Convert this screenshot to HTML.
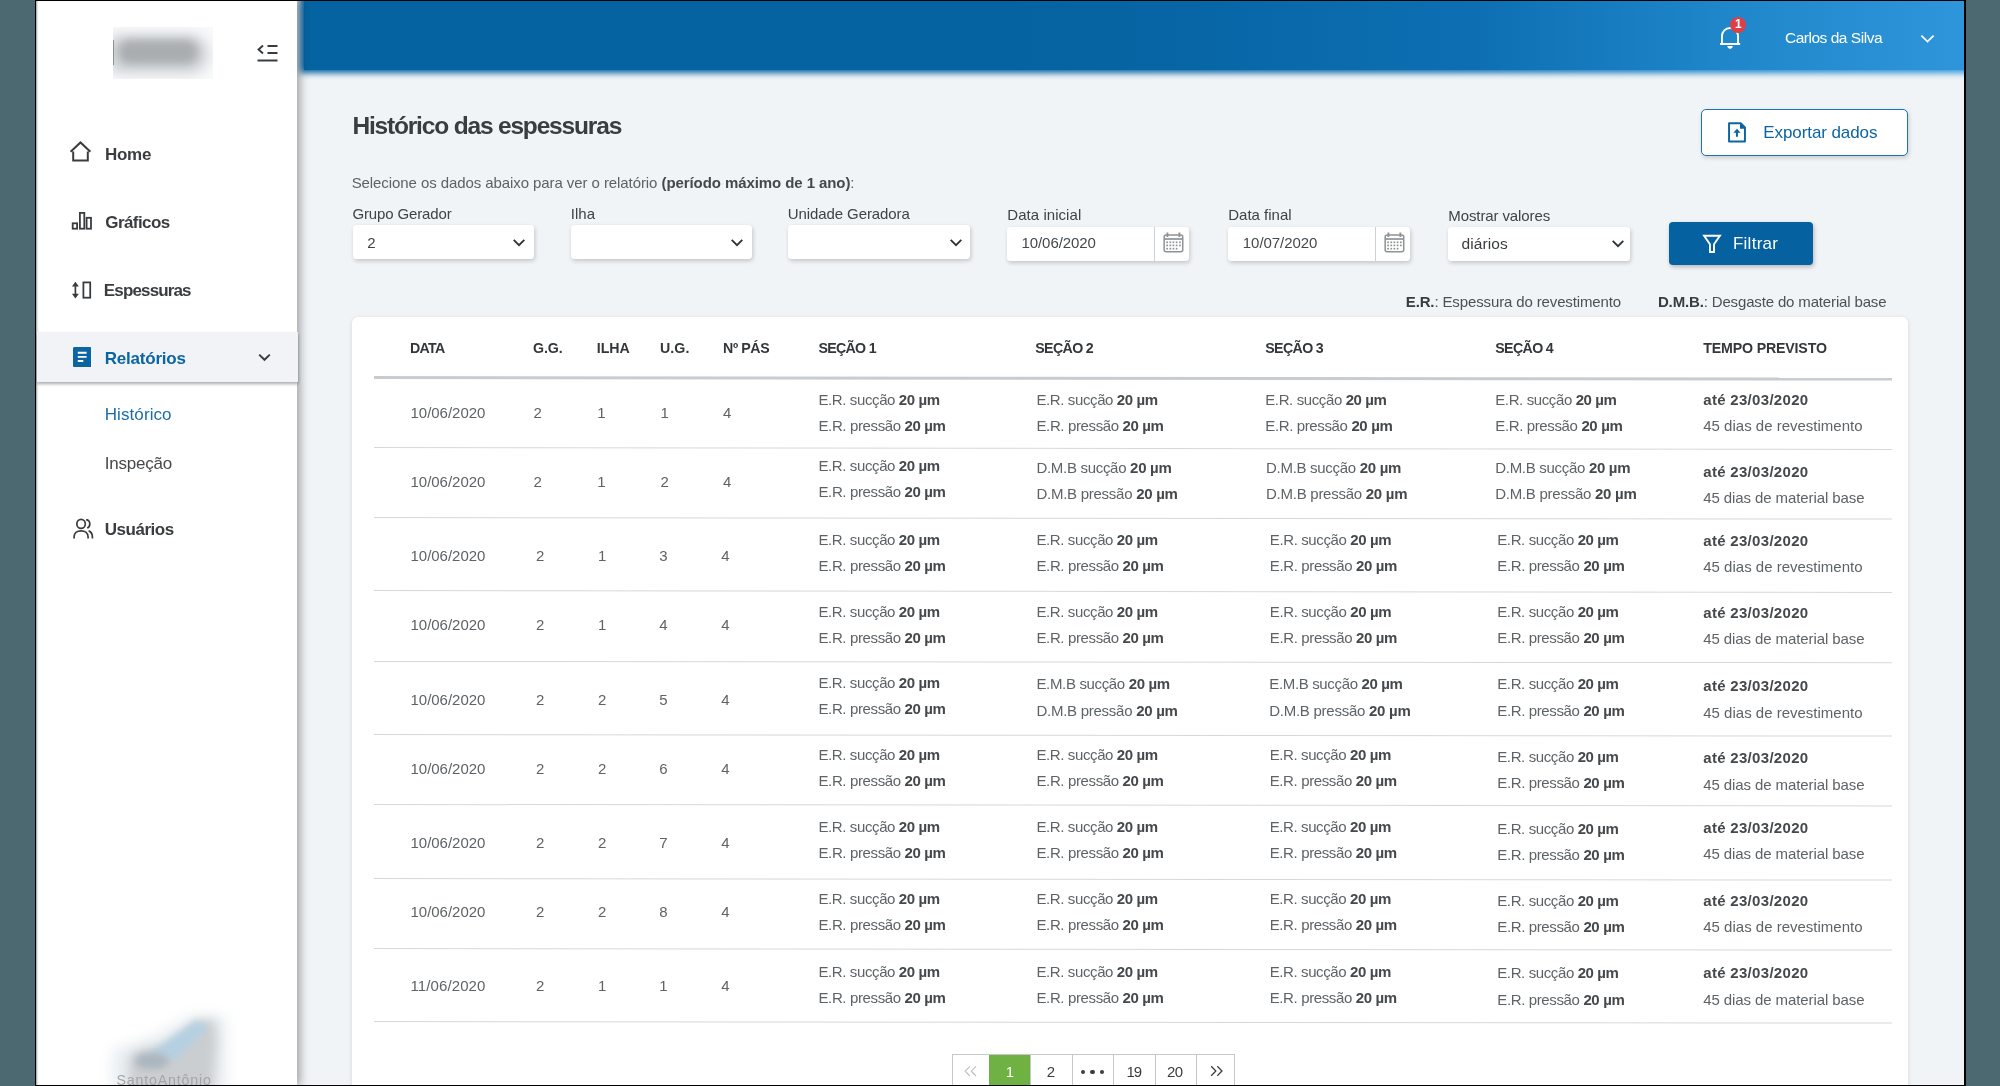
<!DOCTYPE html>
<html lang="pt-BR"><head><meta charset="utf-8"><title>Histórico das espessuras</title>
<style>
html,body{margin:0;padding:0}
body{width:2000px;height:1086px;overflow:hidden;background:#4c6870;position:relative;font-family:"Liberation Sans", sans-serif;}
.t{position:absolute;white-space:nowrap;line-height:1;margin:0;padding:0}
.a{position:absolute}
b{font-weight:700}

#frame{position:absolute;left:35px;top:0;width:1931px;height:1086px;background:#000;}
#page{z-index:0;position:absolute;left:36px;top:1px;width:1928px;height:1084px;background:#f0f4f7;overflow:hidden}
#side{position:absolute;left:0;top:0;width:261px;height:1084px;background:#fff;box-shadow:2px 0 9px 1px rgba(0,0,0,.34),inset 2px 0 2px -1px rgba(0,0,0,.4);z-index:3}
#hdr{position:absolute;left:267.5px;top:-6px;right:-8px;height:75px;background:linear-gradient(90deg,#0563a1 0%,#0563a1 42%,#0765a5 52%,#0d6fb2 70%,#1f86ca 85%,#2e95da 99%);z-index:2}
#hglow{position:absolute;left:264px;top:-10px;right:-12px;height:81.7px;background:linear-gradient(90deg,#0563a1 0%,#0563a1 42%,#0765a5 52%,#0d6fb2 70%,#1f86ca 85%,#2e95da 99%);filter:blur(3.2px);z-index:1}
#card{position:absolute;left:316px;top:315.8px;width:1555.7px;height:800px;background:#fff;border-radius:6px;box-shadow:0 1px 4px rgba(0,0,0,.12)}
.sel{position:absolute;background:#fff;border-radius:3.5px;box-shadow:1px 2px 4px rgba(0,0,0,.19)}
.hl{position:absolute;height:1px;background:#d3d9dc;left:374.3px;width:1517.7px}
#w{position:absolute;left:0;top:0;width:2000px;height:1086px;will-change:transform}
</style></head><body><div id="w">
<div id="frame"></div>
<div id="page"><div id="side"></div><div id="hglow"></div><div id="hdr"></div><div id="card"></div></div>
<div class="a" style="left:113px;top:26.7px;width:100.3px;height:52.5px;overflow:hidden;background:#f8f9fb"><div class="a" style="left:-10px;top:7px;width:106px;height:40px;border-radius:20px;background:#d2d5d8;filter:blur(6px)"></div><div class="a" style="left:5px;top:13.5px;width:80px;height:24px;border-radius:12px;background:#a9adb0;filter:blur(4.5px)"></div><div class="a" style="left:0;top:13.5px;width:1.2px;height:24.5px;background:#6f7376;opacity:.7"></div></div>
<svg class="a" style="left:256px;top:43px;" width="23" height="20" viewBox="0 0 23 20"><g fill="none" stroke="#3a3d40" stroke-width="2"><path d="M11.5 3H21.5M11.5 10H21.5M1.5 17.5H21.5"/><path d="M7 2.6L2.6 6.5L7 10.4" stroke-linejoin="miter"/></g></svg>
<svg class="a" style="left:69px;top:140px;" width="24" height="23" viewBox="0 0 24 23"><path d="M4.2 11.5V20.5H18.8V11.5M1.6 11.8L11.5 2.4L21.4 11.8" fill="none" stroke="#3a3d40" stroke-width="2" stroke-linejoin="miter"/></svg>
<div class="t" style="left:104.95px;top:145.81px;font-size:17px;color:#3a3d40;font-weight:700;letter-spacing:-0.238px;">Home</div>
<svg class="a" style="left:71px;top:211px;" width="22" height="20" viewBox="0 0 22 20"><g fill="none" stroke="#3a3d40" stroke-width="1.8"><rect x="1.7" y="12.3" width="4.4" height="5.4"/><rect x="8.9" y="1.9" width="4.4" height="15.8"/><rect x="15.6" y="6.8" width="4.4" height="10.9"/></g></svg>
<div class="t" style="left:105.25px;top:213.91px;font-size:17px;color:#3a3d40;font-weight:700;letter-spacing:-0.581px;">Gráficos</div>
<svg class="a" style="left:71px;top:280px;" width="22" height="20" viewBox="0 0 22 20"><g fill="none" stroke="#3a3d40" stroke-width="1.8"><rect x="12.4" y="2.4" width="6.8" height="15.3"/><path d="M4.4 4.5V15.5" stroke-width="1.7"/></g><path d="M4.4 1.7L7.9 6.4H0.9ZM4.4 18.4L7.9 13.7H0.9Z" fill="#3a3d40"/></svg>
<div class="t" style="left:103.85px;top:282.01px;font-size:17px;color:#3a3d40;font-weight:700;letter-spacing:-0.859px;">Espessuras</div>
<div class="a" style="left:36.5px;top:332px;width:261px;height:50px;background:#f1f3f7;box-shadow:0 2px 3px rgba(0,0,0,.33);z-index:4"></div>
<svg class="a" style="left:72.5px;top:347px;z-index:5;" width="18.5" height="20.2" viewBox="0 0 18.5 20.2"><rect x="0" y="0" width="18.5" height="20.2" rx="1.5" fill="#0c65a3"/><path d="M4.8 5.8H13.6M4.8 9.9H13.6M4.8 14H10.3" stroke="#fff" stroke-width="1.9" fill="none"/></svg>
<div class="t" style="left:104.75px;top:349.51px;font-size:17px;color:#0c65a3;font-weight:700;letter-spacing:-0.213px;z-index:5;">Relatórios</div>
<svg class="a" style="left:257px;top:352px;z-index:5;" width="15" height="11" viewBox="0 0 15 11"><path d="M2.2 2.6L7.5 7.8L12.8 2.6" fill="none" stroke="#3a3d40" stroke-width="1.9"/></svg>
<div class="t" style="left:104.75px;top:405.81px;font-size:17px;color:#1b6dab;letter-spacing:0.087px;">Histórico</div>
<div class="t" style="left:104.75px;top:454.51px;font-size:17px;color:#45494c;letter-spacing:-0.211px;">Inspeção</div>
<svg class="a" style="left:70px;top:516px;" width="25" height="25" viewBox="0 0 25 25"><g fill="none" stroke="#3a3d40" stroke-width="1.9" transform="translate(1.9 0.6) scale(0.9 0.96)"><circle cx="10.2" cy="7.6" r="4.7"/><path d="M2.4 22.8V21.2C2.4 17.2 5.6 14.8 10.2 14.8C14.8 14.8 18 17.2 18 21.2V22.8"/><path d="M15.8 3.2C18.4 3.6 19.9 5.4 19.9 7.6C19.9 9.6 18.7 11.2 17 11.9M18.6 14.9C21.2 15.9 22.8 18 22.8 21.2V22.8"/></g></svg>
<div class="t" style="left:104.75px;top:520.81px;font-size:17px;color:#3a3d40;font-weight:700;letter-spacing:-0.476px;">Usuários</div>
<svg class="a" style="left:95px;top:1000px" width="150" height="86" viewBox="95 1000 150 86"><defs><filter id="bl1" x="-30%" y="-30%" width="160%" height="160%"><feGaussianBlur stdDeviation="5.5"/></filter><filter id="bl2" x="-30%" y="-30%" width="160%" height="160%"><feGaussianBlur stdDeviation="3.5"/></filter><filter id="bl3" x="-30%" y="-30%" width="160%" height="160%"><feGaussianBlur stdDeviation="7"/></filter></defs><path d="M112 1092V1050L150 1038L190 1016L226 1016V1092Z" fill="#e9eef2" filter="url(#bl3)"/><path d="M129 1096V1056L142 1049L166 1046L186 1030L199 1020L215 1020L217 1042L213 1096Z" fill="#cbced0" filter="url(#bl1)"/><path d="M148 1054L196 1021L209 1027L176 1060Z" fill="#b5d0e2" filter="url(#bl2)"/><ellipse cx="152" cy="1061" rx="17" ry="8" fill="#aab6bf" filter="url(#bl2)"/></svg>
<div class="t" style="left:116.59px;top:1073.18px;font-size:14.2px;color:#a3a6a8;letter-spacing:0.832px;">SantoAntônio</div>
<svg class="a" style="left:1717px;top:24px;" width="27" height="28" viewBox="0 0 27 28"><g fill="none" stroke="#fff" stroke-width="1.9"><path d="M4.95 19.4V12A8.05 8.05 0 0 1 21.05 12V19.4"/><path d="M3 20H23.2" stroke-width="2"/></g><path d="M10.3 22.1H15.8C15.6 23.9 14.4 24.9 13.05 24.9C11.7 24.9 10.5 23.9 10.3 22.1Z" fill="#fff"/></svg>
<div class="a" style="left:1730.2px;top:17.1px;width:15.8px;height:15.8px;border-radius:50%;background:#dc4046"></div>
<div class="t" style="left:1735.00px;top:18.44px;font-size:12px;color:#fff;font-weight:700;">1</div>
<div class="t" style="left:1784.92px;top:30.28px;font-size:15.5px;color:#fff;letter-spacing:-0.473px;">Carlos da Silva</div>
<svg class="a" style="left:1919px;top:33px;" width="17" height="12" viewBox="0 0 17 12"><path d="M2.4 2.6L8.5 8.6L14.6 2.6" fill="none" stroke="#fff" stroke-width="1.7"/></svg>
<div class="t" style="left:352.38px;top:114.46px;font-size:24.5px;color:#3a3d40;font-weight:700;letter-spacing:-1.173px;">Histórico das espessuras</div>
<div class="a" style="left:1700.8px;top:109px;width:205px;height:44.6px;border:1px solid #1f72ad;border-radius:5px;background:#fff;box-shadow:1px 2px 4px rgba(0,0,0,.16)"></div>
<svg class="a" style="left:1727px;top:121px;" width="21" height="23" viewBox="0 0 21 23"><path d="M2.05 2.15H13.7L17.95 6.5V20.45H2.05Z" fill="none" stroke="#0c65a3" stroke-width="1.95" stroke-linejoin="round"/><path d="M13 2.1V7.7H17.95V6.5L13.7 2.1Z" fill="#0c65a3"/><path d="M9.95 7.7L13.6 11.7H6.3Z" fill="#0c65a3"/><path d="M9.95 10.5V14.9" stroke="#0c65a3" stroke-width="2" stroke-linecap="round" fill="none"/></svg>
<div class="t" style="left:1763.35px;top:123.51px;font-size:17px;color:#0c65a3;letter-spacing:-0.091px;">Exportar dados</div>
<div class="t" style="left:351.65px;top:174.60px;font-size:15px;color:#5d6266;letter-spacing:-0.079px;">Selecione os dados abaixo para ver o relatório <b style="color:#45494c">(período máximo de 1 ano)</b>:</div>
<div class="t" style="left:352.45px;top:206.00px;font-size:15px;color:#3f4346;letter-spacing:-0.133px;">Grupo Gerador</div>
<div class="t" style="left:570.65px;top:206.00px;font-size:15px;color:#3f4346;letter-spacing:0.104px;">Ilha</div>
<div class="t" style="left:787.85px;top:206.00px;font-size:15px;color:#3f4346;letter-spacing:-0.101px;">Unidade Geradora</div>
<div class="t" style="left:1007.25px;top:207.40px;font-size:15px;color:#3f4346;letter-spacing:0.057px;">Data inicial</div>
<div class="t" style="left:1228.25px;top:207.40px;font-size:15px;color:#3f4346;letter-spacing:0.003px;">Data final</div>
<div class="t" style="left:1448.35px;top:208.10px;font-size:15px;color:#3f4346;letter-spacing:-0.111px;">Mostrar valores</div>
<div class="sel" style="left:353px;top:225px;width:181px;height:33.6px"></div>
<svg class="a" style="left:511.5px;top:238px;" width="14" height="10" viewBox="0 0 14 10"><path d="M1.7 1.9L7 7.2L12.3 1.9" fill="none" stroke="#303336" stroke-width="1.85"/></svg>
<div class="sel" style="left:570.6px;top:225px;width:181.4px;height:33.6px"></div>
<svg class="a" style="left:729.5px;top:238px;" width="14" height="10" viewBox="0 0 14 10"><path d="M1.7 1.9L7 7.2L12.3 1.9" fill="none" stroke="#303336" stroke-width="1.85"/></svg>
<div class="sel" style="left:787.8px;top:225px;width:182px;height:33.6px"></div>
<svg class="a" style="left:949px;top:237.5px;" width="14" height="10" viewBox="0 0 14 10"><path d="M1.7 1.9L7 7.2L12.3 1.9" fill="none" stroke="#303336" stroke-width="1.85"/></svg>
<div class="t" style="left:367.25px;top:235.00px;font-size:15px;color:#3f4346;">2</div>
<div class="sel" style="left:1006.9px;top:226.5px;width:182.2px;height:34.2px"></div>
<div class="a" style="left:1154px;top:226.5px;width:1px;height:34.2px;background:#cfd2d4"></div>
<div class="t" style="left:1021.45px;top:235.30px;font-size:15px;color:#45494c;letter-spacing:-0.064px;">10/06/2020</div>
<svg class="a" style="left:1162.6px;top:231.6px;" width="21" height="21" viewBox="0 0 21 21"><g fill="none" stroke="#8f9396" stroke-width="1.5"><rect x="1.15" y="3.05" width="18.6" height="16.6" rx="2"/><path d="M1.2 7H19.7" stroke-width="1.7"/><path d="M4.4 0.4V5M16.4 0.4V5" stroke-width="1.9"/></g><g fill="#8f9396"><rect x="3.25" y="9.45" width="1.7" height="1.7"/><rect x="6.45" y="9.45" width="1.7" height="1.7"/><rect x="9.55" y="9.45" width="1.7" height="1.7"/><rect x="12.75" y="9.45" width="1.7" height="1.7"/><rect x="16.05" y="9.45" width="1.7" height="1.7"/><rect x="3.25" y="12.55" width="1.7" height="1.7"/><rect x="6.45" y="12.55" width="1.7" height="1.7"/><rect x="9.55" y="12.55" width="1.7" height="1.7"/><rect x="12.75" y="12.55" width="1.7" height="1.7"/><rect x="16.05" y="12.55" width="1.7" height="1.7"/><rect x="3.25" y="15.85" width="1.7" height="1.7"/><rect x="6.45" y="15.85" width="1.7" height="1.7"/><rect x="9.55" y="15.85" width="1.7" height="1.7"/><rect x="12.75" y="15.85" width="1.7" height="1.7"/></g></svg>
<div class="sel" style="left:1227.8px;top:226.5px;width:182.1px;height:34.2px"></div>
<div class="a" style="left:1375px;top:226.5px;width:1px;height:34.2px;background:#cfd2d4"></div>
<div class="t" style="left:1242.85px;top:235.30px;font-size:15px;color:#45494c;letter-spacing:-0.064px;">10/07/2020</div>
<svg class="a" style="left:1383.6px;top:231.6px;" width="21" height="21" viewBox="0 0 21 21"><g fill="none" stroke="#8f9396" stroke-width="1.5"><rect x="1.15" y="3.05" width="18.6" height="16.6" rx="2"/><path d="M1.2 7H19.7" stroke-width="1.7"/><path d="M4.4 0.4V5M16.4 0.4V5" stroke-width="1.9"/></g><g fill="#8f9396"><rect x="3.25" y="9.45" width="1.7" height="1.7"/><rect x="6.45" y="9.45" width="1.7" height="1.7"/><rect x="9.55" y="9.45" width="1.7" height="1.7"/><rect x="12.75" y="9.45" width="1.7" height="1.7"/><rect x="16.05" y="9.45" width="1.7" height="1.7"/><rect x="3.25" y="12.55" width="1.7" height="1.7"/><rect x="6.45" y="12.55" width="1.7" height="1.7"/><rect x="9.55" y="12.55" width="1.7" height="1.7"/><rect x="12.75" y="12.55" width="1.7" height="1.7"/><rect x="16.05" y="12.55" width="1.7" height="1.7"/><rect x="3.25" y="15.85" width="1.7" height="1.7"/><rect x="6.45" y="15.85" width="1.7" height="1.7"/><rect x="9.55" y="15.85" width="1.7" height="1.7"/><rect x="12.75" y="15.85" width="1.7" height="1.7"/></g></svg>
<div class="sel" style="left:1447.8px;top:226.6px;width:182px;height:34.4px"></div>
<svg class="a" style="left:1610.7px;top:239px;" width="14" height="10" viewBox="0 0 14 10"><path d="M1.7 1.9L7 7.2L12.3 1.9" fill="none" stroke="#303336" stroke-width="1.85"/></svg>
<div class="t" style="left:1461.52px;top:235.78px;font-size:15.5px;color:#3a3d40;letter-spacing:0.110px;">diários</div>
<div class="a" style="left:1668.6px;top:221.7px;width:144.9px;height:42.9px;border-radius:4px;background:#0561a0;box-shadow:1px 2px 4px rgba(0,0,0,.25)"></div>
<svg class="a" style="left:1702px;top:234px;" width="20" height="20" viewBox="0 0 20 20"><path d="M2.1 1.75H17.9L12 10.3V18H7.95V10.3Z" fill="none" stroke="#fff" stroke-width="1.9" stroke-linejoin="miter"/></svg>
<div class="t" style="left:1732.95px;top:235.31px;font-size:17px;color:#fff;letter-spacing:0.261px;">Filtrar</div>
<div class="t" style="left:1405.75px;top:294.20px;font-size:15px;color:#4d5155;letter-spacing:-0.129px;"><b style="color:#3a3d40">E.R.</b>: Espessura do revestimento</div>
<div class="t" style="left:1657.95px;top:294.20px;font-size:15px;color:#4d5155;letter-spacing:-0.152px;"><b style="color:#3a3d40">D.M.B.</b>: Desgaste do material base</div>
<div class="t" style="left:410.04px;top:340.93px;font-size:14.2px;color:#34373a;font-weight:700;letter-spacing:-0.732px;">DATA</div>
<div class="t" style="left:533.04px;top:340.93px;font-size:14.2px;color:#34373a;font-weight:700;letter-spacing:-0.122px;">G.G.</div>
<div class="t" style="left:596.79px;top:340.93px;font-size:14.2px;color:#34373a;font-weight:700;letter-spacing:-0.086px;">ILHA</div>
<div class="t" style="left:660.04px;top:340.93px;font-size:14.2px;color:#34373a;font-weight:700;letter-spacing:0.060px;">U.G.</div>
<div class="t" style="left:723.04px;top:340.93px;font-size:14.2px;color:#34373a;font-weight:700;letter-spacing:-0.389px;">Nº PÁS</div>
<div class="t" style="left:818.49px;top:340.93px;font-size:14.2px;color:#34373a;font-weight:700;letter-spacing:-0.707px;">SEÇÃO 1</div>
<div class="t" style="left:1035.29px;top:340.93px;font-size:14.2px;color:#34373a;font-weight:700;letter-spacing:-0.641px;">SEÇÃO 2</div>
<div class="t" style="left:1265.29px;top:340.93px;font-size:14.2px;color:#34373a;font-weight:700;letter-spacing:-0.641px;">SEÇÃO 3</div>
<div class="t" style="left:1495.29px;top:340.93px;font-size:14.2px;color:#34373a;font-weight:700;letter-spacing:-0.641px;">SEÇÃO 4</div>
<div class="t" style="left:1703.29px;top:340.93px;font-size:14.2px;color:#34373a;font-weight:700;letter-spacing:-0.171px;">TEMPO PREVISTO</div>
<div class="hl" style="top:376.1px;height:3px;background:#c6ccd0;transform-origin:0 50%;transform:skewY(0.0604deg)"></div>
<div class="t" style="left:410.50px;top:405.00px;font-size:15px;color:#5e6367;letter-spacing:-0.020px;">10/06/2020</div>
<div class="t" style="left:533.50px;top:405.00px;font-size:15px;color:#5e6367;">2</div>
<div class="t" style="left:597.25px;top:405.00px;font-size:15px;color:#5e6367;">1</div>
<div class="t" style="left:660.50px;top:405.00px;font-size:15px;color:#5e6367;">1</div>
<div class="t" style="left:723.00px;top:405.00px;font-size:15px;color:#5e6367;">4</div>
<div class="t" style="left:818.45px;top:391.80px;font-size:15px;color:#5e6367;letter-spacing:-0.387px;">E.R. sucção <b style="color:#45494c">20 µm</b></div>
<div class="t" style="left:818.45px;top:417.80px;font-size:15px;color:#5e6367;letter-spacing:-0.366px;">E.R. pressão <b style="color:#45494c">20 µm</b></div>
<div class="t" style="left:1036.45px;top:391.80px;font-size:15px;color:#5e6367;letter-spacing:-0.387px;">E.R. sucção <b style="color:#45494c">20 µm</b></div>
<div class="t" style="left:1036.45px;top:417.80px;font-size:15px;color:#5e6367;letter-spacing:-0.366px;">E.R. pressão <b style="color:#45494c">20 µm</b></div>
<div class="t" style="left:1265.25px;top:391.80px;font-size:15px;color:#5e6367;letter-spacing:-0.387px;">E.R. sucção <b style="color:#45494c">20 µm</b></div>
<div class="t" style="left:1265.25px;top:417.80px;font-size:15px;color:#5e6367;letter-spacing:-0.366px;">E.R. pressão <b style="color:#45494c">20 µm</b></div>
<div class="t" style="left:1495.25px;top:391.80px;font-size:15px;color:#5e6367;letter-spacing:-0.387px;">E.R. sucção <b style="color:#45494c">20 µm</b></div>
<div class="t" style="left:1495.25px;top:417.80px;font-size:15px;color:#5e6367;letter-spacing:-0.366px;">E.R. pressão <b style="color:#45494c">20 µm</b></div>
<div class="t" style="left:1703.25px;top:391.80px;font-size:15px;color:#45494c;font-weight:700;letter-spacing:0.306px;">até 23/03/2020</div>
<div class="t" style="left:1703.25px;top:417.80px;font-size:15px;color:#5e6367;letter-spacing:0.002px;">45 dias de revestimento</div>
<div class="hl" style="top:446.7px;height:1px;background:#d3d9dc;transform-origin:0 50%;transform:skewY(0.0755deg)"></div>
<div class="t" style="left:410.50px;top:474.20px;font-size:15px;color:#5e6367;letter-spacing:-0.020px;">10/06/2020</div>
<div class="t" style="left:533.50px;top:474.20px;font-size:15px;color:#5e6367;">2</div>
<div class="t" style="left:597.25px;top:474.20px;font-size:15px;color:#5e6367;">1</div>
<div class="t" style="left:660.50px;top:474.20px;font-size:15px;color:#5e6367;">2</div>
<div class="t" style="left:723.00px;top:474.20px;font-size:15px;color:#5e6367;">4</div>
<div class="t" style="left:818.45px;top:458.20px;font-size:15px;color:#5e6367;letter-spacing:-0.387px;">E.R. sucção <b style="color:#45494c">20 µm</b></div>
<div class="t" style="left:818.45px;top:484.20px;font-size:15px;color:#5e6367;letter-spacing:-0.366px;">E.R. pressão <b style="color:#45494c">20 µm</b></div>
<div class="t" style="left:1036.45px;top:460.20px;font-size:15px;color:#5e6367;letter-spacing:-0.299px;">D.M.B sucção <b style="color:#45494c">20 µm</b></div>
<div class="t" style="left:1036.45px;top:486.20px;font-size:15px;color:#5e6367;letter-spacing:-0.262px;">D.M.B pressão <b style="color:#45494c">20 µm</b></div>
<div class="t" style="left:1266.05px;top:460.20px;font-size:15px;color:#5e6367;letter-spacing:-0.299px;">D.M.B sucção <b style="color:#45494c">20 µm</b></div>
<div class="t" style="left:1266.05px;top:486.20px;font-size:15px;color:#5e6367;letter-spacing:-0.262px;">D.M.B pressão <b style="color:#45494c">20 µm</b></div>
<div class="t" style="left:1495.25px;top:460.20px;font-size:15px;color:#5e6367;letter-spacing:-0.299px;">D.M.B sucção <b style="color:#45494c">20 µm</b></div>
<div class="t" style="left:1495.25px;top:486.20px;font-size:15px;color:#5e6367;letter-spacing:-0.262px;">D.M.B pressão <b style="color:#45494c">20 µm</b></div>
<div class="t" style="left:1703.25px;top:463.80px;font-size:15px;color:#45494c;font-weight:700;letter-spacing:0.306px;">até 23/03/2020</div>
<div class="t" style="left:1703.25px;top:489.80px;font-size:15px;color:#5e6367;letter-spacing:-0.093px;">45 dias de material base</div>
<div class="hl" style="top:516.7px;height:1px;background:#d3d9dc;transform-origin:0 50%;transform:skewY(0.0604deg)"></div>
<div class="t" style="left:410.50px;top:548.20px;font-size:15px;color:#5e6367;letter-spacing:-0.020px;">10/06/2020</div>
<div class="t" style="left:536.05px;top:548.20px;font-size:15px;color:#5e6367;">2</div>
<div class="t" style="left:598.05px;top:548.20px;font-size:15px;color:#5e6367;">1</div>
<div class="t" style="left:659.25px;top:548.20px;font-size:15px;color:#5e6367;">3</div>
<div class="t" style="left:721.25px;top:548.20px;font-size:15px;color:#5e6367;">4</div>
<div class="t" style="left:818.45px;top:532.20px;font-size:15px;color:#5e6367;letter-spacing:-0.387px;">E.R. sucção <b style="color:#45494c">20 µm</b></div>
<div class="t" style="left:818.45px;top:558.20px;font-size:15px;color:#5e6367;letter-spacing:-0.366px;">E.R. pressão <b style="color:#45494c">20 µm</b></div>
<div class="t" style="left:1036.45px;top:532.20px;font-size:15px;color:#5e6367;letter-spacing:-0.387px;">E.R. sucção <b style="color:#45494c">20 µm</b></div>
<div class="t" style="left:1036.45px;top:558.20px;font-size:15px;color:#5e6367;letter-spacing:-0.366px;">E.R. pressão <b style="color:#45494c">20 µm</b></div>
<div class="t" style="left:1269.85px;top:532.20px;font-size:15px;color:#5e6367;letter-spacing:-0.387px;">E.R. sucção <b style="color:#45494c">20 µm</b></div>
<div class="t" style="left:1269.85px;top:558.20px;font-size:15px;color:#5e6367;letter-spacing:-0.366px;">E.R. pressão <b style="color:#45494c">20 µm</b></div>
<div class="t" style="left:1497.25px;top:532.20px;font-size:15px;color:#5e6367;letter-spacing:-0.387px;">E.R. sucção <b style="color:#45494c">20 µm</b></div>
<div class="t" style="left:1497.25px;top:558.20px;font-size:15px;color:#5e6367;letter-spacing:-0.366px;">E.R. pressão <b style="color:#45494c">20 µm</b></div>
<div class="t" style="left:1703.25px;top:533.00px;font-size:15px;color:#45494c;font-weight:700;letter-spacing:0.306px;">até 23/03/2020</div>
<div class="t" style="left:1703.25px;top:559.40px;font-size:15px;color:#5e6367;letter-spacing:0.002px;">45 dias de revestimento</div>
<div class="hl" style="top:590.3px;height:1px;background:#d3d9dc;transform-origin:0 50%;transform:skewY(0.0755deg)"></div>
<div class="t" style="left:410.50px;top:617.00px;font-size:15px;color:#5e6367;letter-spacing:-0.020px;">10/06/2020</div>
<div class="t" style="left:536.05px;top:617.00px;font-size:15px;color:#5e6367;">2</div>
<div class="t" style="left:598.05px;top:617.00px;font-size:15px;color:#5e6367;">1</div>
<div class="t" style="left:659.25px;top:617.00px;font-size:15px;color:#5e6367;">4</div>
<div class="t" style="left:721.25px;top:617.00px;font-size:15px;color:#5e6367;">4</div>
<div class="t" style="left:818.45px;top:604.20px;font-size:15px;color:#5e6367;letter-spacing:-0.387px;">E.R. sucção <b style="color:#45494c">20 µm</b></div>
<div class="t" style="left:818.45px;top:630.20px;font-size:15px;color:#5e6367;letter-spacing:-0.366px;">E.R. pressão <b style="color:#45494c">20 µm</b></div>
<div class="t" style="left:1036.45px;top:604.20px;font-size:15px;color:#5e6367;letter-spacing:-0.387px;">E.R. sucção <b style="color:#45494c">20 µm</b></div>
<div class="t" style="left:1036.45px;top:630.20px;font-size:15px;color:#5e6367;letter-spacing:-0.366px;">E.R. pressão <b style="color:#45494c">20 µm</b></div>
<div class="t" style="left:1269.85px;top:604.20px;font-size:15px;color:#5e6367;letter-spacing:-0.387px;">E.R. sucção <b style="color:#45494c">20 µm</b></div>
<div class="t" style="left:1269.85px;top:630.20px;font-size:15px;color:#5e6367;letter-spacing:-0.366px;">E.R. pressão <b style="color:#45494c">20 µm</b></div>
<div class="t" style="left:1497.25px;top:604.20px;font-size:15px;color:#5e6367;letter-spacing:-0.387px;">E.R. sucção <b style="color:#45494c">20 µm</b></div>
<div class="t" style="left:1497.25px;top:630.20px;font-size:15px;color:#5e6367;letter-spacing:-0.366px;">E.R. pressão <b style="color:#45494c">20 µm</b></div>
<div class="t" style="left:1703.25px;top:605.00px;font-size:15px;color:#45494c;font-weight:700;letter-spacing:0.306px;">até 23/03/2020</div>
<div class="t" style="left:1703.25px;top:631.00px;font-size:15px;color:#5e6367;letter-spacing:-0.093px;">45 dias de material base</div>
<div class="hl" style="top:660.7px;height:1px;background:#d3d9dc;transform-origin:0 50%;transform:skewY(0.0453deg)"></div>
<div class="t" style="left:410.50px;top:691.80px;font-size:15px;color:#5e6367;letter-spacing:-0.020px;">10/06/2020</div>
<div class="t" style="left:536.05px;top:691.80px;font-size:15px;color:#5e6367;">2</div>
<div class="t" style="left:598.05px;top:691.80px;font-size:15px;color:#5e6367;">2</div>
<div class="t" style="left:659.25px;top:691.80px;font-size:15px;color:#5e6367;">5</div>
<div class="t" style="left:721.25px;top:691.80px;font-size:15px;color:#5e6367;">4</div>
<div class="t" style="left:818.45px;top:674.60px;font-size:15px;color:#5e6367;letter-spacing:-0.387px;">E.R. sucção <b style="color:#45494c">20 µm</b></div>
<div class="t" style="left:818.45px;top:700.80px;font-size:15px;color:#5e6367;letter-spacing:-0.366px;">E.R. pressão <b style="color:#45494c">20 µm</b></div>
<div class="t" style="left:1036.45px;top:676.20px;font-size:15px;color:#5e6367;letter-spacing:-0.344px;">E.M.B sucção <b style="color:#45494c">20 µm</b></div>
<div class="t" style="left:1036.45px;top:702.60px;font-size:15px;color:#5e6367;letter-spacing:-0.262px;">D.M.B pressão <b style="color:#45494c">20 µm</b></div>
<div class="t" style="left:1269.25px;top:676.20px;font-size:15px;color:#5e6367;letter-spacing:-0.344px;">E.M.B sucção <b style="color:#45494c">20 µm</b></div>
<div class="t" style="left:1269.25px;top:702.60px;font-size:15px;color:#5e6367;letter-spacing:-0.262px;">D.M.B pressão <b style="color:#45494c">20 µm</b></div>
<div class="t" style="left:1497.25px;top:676.20px;font-size:15px;color:#5e6367;letter-spacing:-0.387px;">E.R. sucção <b style="color:#45494c">20 µm</b></div>
<div class="t" style="left:1497.25px;top:702.60px;font-size:15px;color:#5e6367;letter-spacing:-0.366px;">E.R. pressão <b style="color:#45494c">20 µm</b></div>
<div class="t" style="left:1703.25px;top:678.20px;font-size:15px;color:#45494c;font-weight:700;letter-spacing:0.306px;">até 23/03/2020</div>
<div class="t" style="left:1703.25px;top:704.60px;font-size:15px;color:#5e6367;letter-spacing:0.002px;">45 dias de revestimento</div>
<div class="hl" style="top:733.9px;height:1px;background:#d3d9dc;transform-origin:0 50%;transform:skewY(0.0604deg)"></div>
<div class="t" style="left:410.50px;top:761.00px;font-size:15px;color:#5e6367;letter-spacing:-0.020px;">10/06/2020</div>
<div class="t" style="left:536.05px;top:761.00px;font-size:15px;color:#5e6367;">2</div>
<div class="t" style="left:598.05px;top:761.00px;font-size:15px;color:#5e6367;">2</div>
<div class="t" style="left:659.25px;top:761.00px;font-size:15px;color:#5e6367;">6</div>
<div class="t" style="left:721.25px;top:761.00px;font-size:15px;color:#5e6367;">4</div>
<div class="t" style="left:818.45px;top:746.60px;font-size:15px;color:#5e6367;letter-spacing:-0.387px;">E.R. sucção <b style="color:#45494c">20 µm</b></div>
<div class="t" style="left:818.45px;top:773.00px;font-size:15px;color:#5e6367;letter-spacing:-0.366px;">E.R. pressão <b style="color:#45494c">20 µm</b></div>
<div class="t" style="left:1036.45px;top:746.60px;font-size:15px;color:#5e6367;letter-spacing:-0.387px;">E.R. sucção <b style="color:#45494c">20 µm</b></div>
<div class="t" style="left:1036.45px;top:773.00px;font-size:15px;color:#5e6367;letter-spacing:-0.366px;">E.R. pressão <b style="color:#45494c">20 µm</b></div>
<div class="t" style="left:1269.65px;top:746.60px;font-size:15px;color:#5e6367;letter-spacing:-0.387px;">E.R. sucção <b style="color:#45494c">20 µm</b></div>
<div class="t" style="left:1269.65px;top:773.00px;font-size:15px;color:#5e6367;letter-spacing:-0.366px;">E.R. pressão <b style="color:#45494c">20 µm</b></div>
<div class="t" style="left:1497.25px;top:748.60px;font-size:15px;color:#5e6367;letter-spacing:-0.387px;">E.R. sucção <b style="color:#45494c">20 µm</b></div>
<div class="t" style="left:1497.25px;top:775.00px;font-size:15px;color:#5e6367;letter-spacing:-0.366px;">E.R. pressão <b style="color:#45494c">20 µm</b></div>
<div class="t" style="left:1703.25px;top:750.20px;font-size:15px;color:#45494c;font-weight:700;letter-spacing:0.306px;">até 23/03/2020</div>
<div class="t" style="left:1703.25px;top:776.60px;font-size:15px;color:#5e6367;letter-spacing:-0.093px;">45 dias de material base</div>
<div class="hl" style="top:804.3px;height:1px;background:#d3d9dc;transform-origin:0 50%;transform:skewY(0.0529deg)"></div>
<div class="t" style="left:410.50px;top:835.40px;font-size:15px;color:#5e6367;letter-spacing:-0.020px;">10/06/2020</div>
<div class="t" style="left:536.05px;top:835.40px;font-size:15px;color:#5e6367;">2</div>
<div class="t" style="left:598.05px;top:835.40px;font-size:15px;color:#5e6367;">2</div>
<div class="t" style="left:659.25px;top:835.40px;font-size:15px;color:#5e6367;">7</div>
<div class="t" style="left:721.25px;top:835.40px;font-size:15px;color:#5e6367;">4</div>
<div class="t" style="left:818.45px;top:819.00px;font-size:15px;color:#5e6367;letter-spacing:-0.387px;">E.R. sucção <b style="color:#45494c">20 µm</b></div>
<div class="t" style="left:818.45px;top:845.00px;font-size:15px;color:#5e6367;letter-spacing:-0.366px;">E.R. pressão <b style="color:#45494c">20 µm</b></div>
<div class="t" style="left:1036.45px;top:819.00px;font-size:15px;color:#5e6367;letter-spacing:-0.387px;">E.R. sucção <b style="color:#45494c">20 µm</b></div>
<div class="t" style="left:1036.45px;top:845.00px;font-size:15px;color:#5e6367;letter-spacing:-0.366px;">E.R. pressão <b style="color:#45494c">20 µm</b></div>
<div class="t" style="left:1269.65px;top:819.00px;font-size:15px;color:#5e6367;letter-spacing:-0.387px;">E.R. sucção <b style="color:#45494c">20 µm</b></div>
<div class="t" style="left:1269.65px;top:845.00px;font-size:15px;color:#5e6367;letter-spacing:-0.366px;">E.R. pressão <b style="color:#45494c">20 µm</b></div>
<div class="t" style="left:1497.25px;top:821.00px;font-size:15px;color:#5e6367;letter-spacing:-0.387px;">E.R. sucção <b style="color:#45494c">20 µm</b></div>
<div class="t" style="left:1497.25px;top:847.00px;font-size:15px;color:#5e6367;letter-spacing:-0.366px;">E.R. pressão <b style="color:#45494c">20 µm</b></div>
<div class="t" style="left:1703.25px;top:819.80px;font-size:15px;color:#45494c;font-weight:700;letter-spacing:0.306px;">até 23/03/2020</div>
<div class="t" style="left:1703.25px;top:845.80px;font-size:15px;color:#5e6367;letter-spacing:-0.093px;">45 dias de material base</div>
<div class="hl" style="top:877.5px;height:1px;background:#d3d9dc;transform-origin:0 50%;transform:skewY(0.0604deg)"></div>
<div class="t" style="left:410.50px;top:904.20px;font-size:15px;color:#5e6367;letter-spacing:-0.020px;">10/06/2020</div>
<div class="t" style="left:536.05px;top:904.20px;font-size:15px;color:#5e6367;">2</div>
<div class="t" style="left:598.05px;top:904.20px;font-size:15px;color:#5e6367;">2</div>
<div class="t" style="left:659.25px;top:904.20px;font-size:15px;color:#5e6367;">8</div>
<div class="t" style="left:721.25px;top:904.20px;font-size:15px;color:#5e6367;">4</div>
<div class="t" style="left:818.45px;top:891.40px;font-size:15px;color:#5e6367;letter-spacing:-0.387px;">E.R. sucção <b style="color:#45494c">20 µm</b></div>
<div class="t" style="left:818.45px;top:917.40px;font-size:15px;color:#5e6367;letter-spacing:-0.366px;">E.R. pressão <b style="color:#45494c">20 µm</b></div>
<div class="t" style="left:1036.45px;top:891.40px;font-size:15px;color:#5e6367;letter-spacing:-0.387px;">E.R. sucção <b style="color:#45494c">20 µm</b></div>
<div class="t" style="left:1036.45px;top:917.40px;font-size:15px;color:#5e6367;letter-spacing:-0.366px;">E.R. pressão <b style="color:#45494c">20 µm</b></div>
<div class="t" style="left:1269.65px;top:891.40px;font-size:15px;color:#5e6367;letter-spacing:-0.387px;">E.R. sucção <b style="color:#45494c">20 µm</b></div>
<div class="t" style="left:1269.65px;top:917.40px;font-size:15px;color:#5e6367;letter-spacing:-0.366px;">E.R. pressão <b style="color:#45494c">20 µm</b></div>
<div class="t" style="left:1497.25px;top:893.00px;font-size:15px;color:#5e6367;letter-spacing:-0.387px;">E.R. sucção <b style="color:#45494c">20 µm</b></div>
<div class="t" style="left:1497.25px;top:919.40px;font-size:15px;color:#5e6367;letter-spacing:-0.366px;">E.R. pressão <b style="color:#45494c">20 µm</b></div>
<div class="t" style="left:1703.25px;top:893.00px;font-size:15px;color:#45494c;font-weight:700;letter-spacing:0.306px;">até 23/03/2020</div>
<div class="t" style="left:1703.25px;top:919.40px;font-size:15px;color:#5e6367;letter-spacing:0.002px;">45 dias de revestimento</div>
<div class="hl" style="top:947.9px;height:1px;background:#d3d9dc;transform-origin:0 50%;transform:skewY(0.0604deg)"></div>
<div class="t" style="left:410.50px;top:977.80px;font-size:15px;color:#5e6367;letter-spacing:0.103px;">11/06/2020</div>
<div class="t" style="left:536.05px;top:977.80px;font-size:15px;color:#5e6367;">2</div>
<div class="t" style="left:598.05px;top:977.80px;font-size:15px;color:#5e6367;">1</div>
<div class="t" style="left:659.25px;top:977.80px;font-size:15px;color:#5e6367;">1</div>
<div class="t" style="left:721.25px;top:977.80px;font-size:15px;color:#5e6367;">4</div>
<div class="t" style="left:818.45px;top:963.80px;font-size:15px;color:#5e6367;letter-spacing:-0.387px;">E.R. sucção <b style="color:#45494c">20 µm</b></div>
<div class="t" style="left:818.45px;top:989.80px;font-size:15px;color:#5e6367;letter-spacing:-0.366px;">E.R. pressão <b style="color:#45494c">20 µm</b></div>
<div class="t" style="left:1036.45px;top:963.80px;font-size:15px;color:#5e6367;letter-spacing:-0.387px;">E.R. sucção <b style="color:#45494c">20 µm</b></div>
<div class="t" style="left:1036.45px;top:989.80px;font-size:15px;color:#5e6367;letter-spacing:-0.366px;">E.R. pressão <b style="color:#45494c">20 µm</b></div>
<div class="t" style="left:1269.65px;top:963.80px;font-size:15px;color:#5e6367;letter-spacing:-0.387px;">E.R. sucção <b style="color:#45494c">20 µm</b></div>
<div class="t" style="left:1269.65px;top:989.80px;font-size:15px;color:#5e6367;letter-spacing:-0.366px;">E.R. pressão <b style="color:#45494c">20 µm</b></div>
<div class="t" style="left:1497.25px;top:965.40px;font-size:15px;color:#5e6367;letter-spacing:-0.387px;">E.R. sucção <b style="color:#45494c">20 µm</b></div>
<div class="t" style="left:1497.25px;top:991.80px;font-size:15px;color:#5e6367;letter-spacing:-0.366px;">E.R. pressão <b style="color:#45494c">20 µm</b></div>
<div class="t" style="left:1703.25px;top:965.40px;font-size:15px;color:#45494c;font-weight:700;letter-spacing:0.306px;">até 23/03/2020</div>
<div class="t" style="left:1703.25px;top:991.80px;font-size:15px;color:#5e6367;letter-spacing:-0.093px;">45 dias de material base</div>
<div class="hl" style="top:1020.7px;height:1px;background:#d3d9dc;transform-origin:0 50%;transform:skewY(0.0604deg)"></div>
<div class="a" style="left:952.4px;top:1054.3px;width:282.6px;height:40px;border:1px solid #c6c9cc;background:#fff;box-sizing:border-box"></div>
<div class="a" style="left:988.6px;top:1055px;width:1px;height:40px;background:#c6c9cc"></div>
<div class="a" style="left:1029.7px;top:1055px;width:1px;height:40px;background:#c6c9cc"></div>
<div class="a" style="left:1071.5px;top:1055px;width:1px;height:40px;background:#c6c9cc"></div>
<div class="a" style="left:1113.1px;top:1055px;width:1px;height:40px;background:#c6c9cc"></div>
<div class="a" style="left:1154.9px;top:1055px;width:1px;height:40px;background:#c6c9cc"></div>
<div class="a" style="left:1196px;top:1055px;width:1px;height:40px;background:#c6c9cc"></div>
<div class="a" style="left:989.1px;top:1054.8px;width:41.1px;height:40px;background:#70b143"></div>
<svg class="a" style="left:963px;top:1064px;" width="16" height="14" viewBox="0 0 16 14"><path d="M6.9 2.4L2.2 7.2L6.9 12M13 2.4L8.3 7.2L13 12" fill="none" stroke="#bcbfc2" stroke-width="1.1"/></svg>
<svg class="a" style="left:1209px;top:1064px;" width="16" height="14" viewBox="0 0 16 14"><path d="M2.2 2.2L6.9 7L2.2 11.8M8.3 2.2L13 7L8.3 11.8" fill="none" stroke="#3a3d40" stroke-width="1.25"/></svg>
<div class="t" style="left:1005.85px;top:1063.90px;font-size:15px;color:#fff;">1</div>
<div class="t" style="left:1046.75px;top:1063.90px;font-size:15px;color:#3a3d40;">2</div>
<div class="a" style="left:1081.3px;top:1069.8px;width:4.2px;height:4.2px;border-radius:50%;background:#3a3d40"></div>
<div class="a" style="left:1090.4px;top:1069.8px;width:4.2px;height:4.2px;border-radius:50%;background:#3a3d40"></div>
<div class="a" style="left:1099.6px;top:1069.8px;width:4.2px;height:4.2px;border-radius:50%;background:#3a3d40"></div>
<div class="t" style="left:1126.55px;top:1063.90px;font-size:15px;color:#3a3d40;letter-spacing:-1.188px;">19</div>
<div class="t" style="left:1167.05px;top:1063.90px;font-size:15px;color:#3a3d40;letter-spacing:-0.588px;">20</div>
<div class="a" style="left:35px;top:1085px;width:1931px;height:1px;background:#000"></div>
</div></body></html>
